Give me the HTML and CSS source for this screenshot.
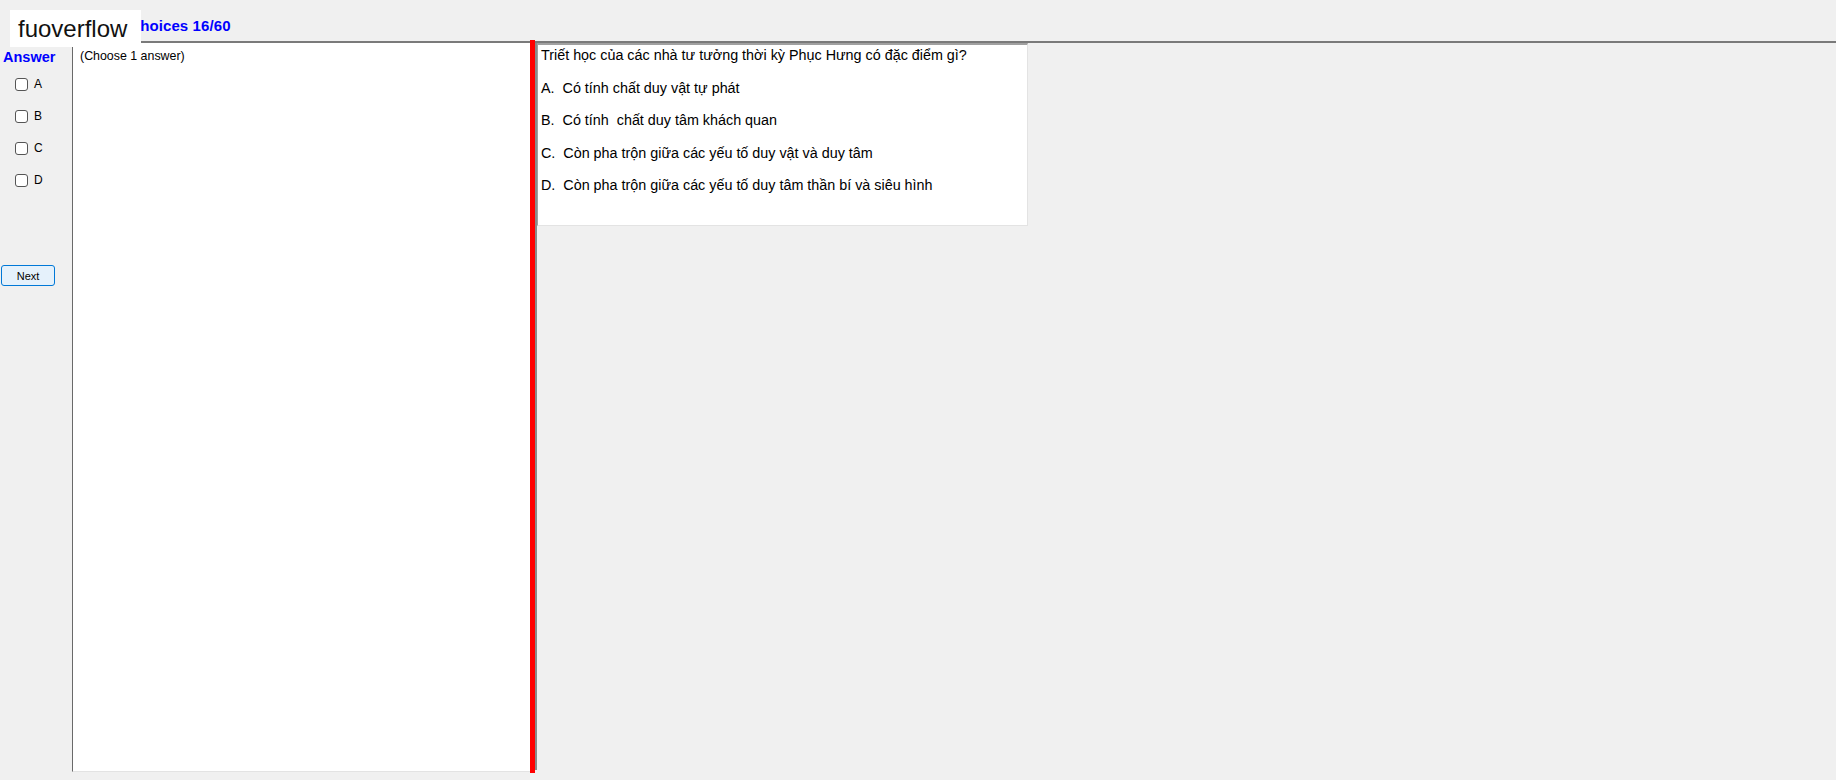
FILE: index.html
```html
<!DOCTYPE html>
<html lang="vi">
<head>
    <meta charset="UTF-8">
    <meta name="viewport" content="width=device-width, initial-scale=1.0">
    <title>Multiple choices</title>
    <link rel="stylesheet" href="styles.css">
</head>
<body>
    <div class="watermark">fuoverflow</div>

    <div class="header">
        <h1 class="title">Multiple choices 16/60</h1>
    </div>

    <div class="main">
        <div class="side">
            <div class="side-label">Answer</div>
            <label class="choice"><input type="checkbox"> A</label>
            <label class="choice"><input type="checkbox"> B</label>
            <label class="choice"><input type="checkbox"> C</label>
            <label class="choice"><input type="checkbox"> D</label>
            <button class="next-btn">Next</button>
        </div>

        <div class="workspace">
            <div class="answer-pane">(Choose 1 answer)</div>
            <div class="splitter"></div>
            <div class="question-pane">
                <div class="question-box">
                    <p>Triết học của các nhà tư tưởng thời kỳ Phục Hưng có đặc điểm gì?</p>
                    <p>A.  Có tính chất duy vật tự phát</p>
                    <p>B.  Có tính  chất duy tâm khách quan</p>
                    <p>C.  Còn pha trộn giữa các yếu tố duy vật và duy tâm</p>
                    <p>D.  Còn pha trộn giữa các yếu tố duy tâm thần bí và siêu hình</p>
                </div>
            </div>
        </div>
    </div>
</body>
</html>
```

FILE: styles.css
```css
html, body { margin: 0; padding: 0; }
body { font-family: "Liberation Sans", Arial, sans-serif; color: #000; background-color: #f0f0f0; width: 1836px; height: 780px; overflow: hidden; position: relative; }

/* overlay label in the top-left corner */
.watermark { position: absolute; left: 10px; top: 10px; height: 37px; line-height: 37px; padding: 0 14px 0 8px; background-color: #fff; font-size: 24px; color: #111; z-index: 5; }

.header { height: 41px; box-sizing: border-box; padding: 17px 0 0 70px; }
.title { margin: 0; font-size: 15px; line-height: 17px; font-weight: bold; color: #0000ff; letter-spacing: 0.1px; }

.main { display: flex; height: 739px; }

.side { width: 72px; flex: none; padding-top: 8px; box-sizing: border-box; }
.side-label { font-size: 14.5px; line-height: 16px; font-weight: bold; color: #0000ff; padding-left: 3px; margin-bottom: 3px; }
.choice { display: flex; align-items: center; height: 32px; padding-left: 15px; font-size: 12px; }
.choice input { appearance: none; -webkit-appearance: none; width: 13px; height: 13px; margin: 0 6px 0 0; border: 1px solid #555; border-radius: 3px; background-color: #fff; box-sizing: border-box; }
.next-btn { display: block; margin: 69px 0 0 1px; width: 54px; height: 21px; padding: 0; font-family: "Liberation Sans", Arial, sans-serif; font-size: 11px; color: #000; background-color: #e5f1fb; border: 1px solid #0078d7; border-radius: 3px; }

.workspace { flex: 1; display: flex; align-items: flex-start; border-top: 2px solid #7a7a7a; }
.answer-pane { width: 458px; height: 729px; box-sizing: border-box; background-color: #fff; border-left: 1px solid #696969; border-bottom: 1px solid #e3e3e3; padding: 6px 0 0 7px; font-size: 12.4px; line-height: 14px; }
.splitter { position: relative; z-index: 2; width: 5px; height: 733px; margin-top: -3px; background-color: #ff0000; flex: none; }
.question-pane { width: 1300px; height: 727px; box-sizing: border-box; border-left: 2px solid #8a8a8a; }
.question-box { width: 491px; height: 183px; box-sizing: border-box; background-color: #fff; border-top: 2px solid #a0a0a0; border-left: 1px solid #a0a0a0; border-right: 1px solid #e3e3e3; border-bottom: 1px solid #e3e3e3; padding: 2px 0 0 3px; }
.question-box p { margin: 0 0 16.5px 0; font-size: 14.35px; line-height: 16px; white-space: pre-wrap; }
```
